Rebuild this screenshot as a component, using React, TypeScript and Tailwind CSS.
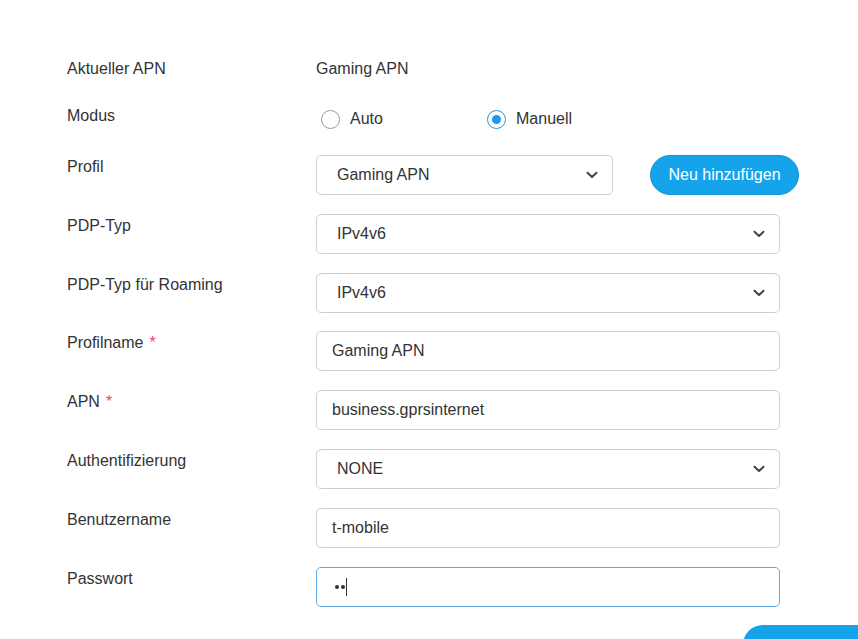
import React from 'react'

const Chevron = () => (
	<svg width="12" height="8" viewBox="0 0 12 8" className="shrink-0">
		<path d="M1.5 1.8 L6 6 L10.5 1.8" fill="none" stroke="#444" strokeWidth="2" strokeLinecap="round" strokeLinejoin="round" />
	</svg>
)

const Radio = ({ checked, label }: { checked?: boolean; label: string }) => (
	<label className="flex items-center gap-[10px] w-[166px]">
		{checked ? (
			<span className="w-[19px] h-[19px] rounded-full border-[1.5px] border-[#1a9be8] flex items-center justify-center">
				<span className="w-[9px] h-[9px] rounded-full bg-[#1a9be8]" />
			</span>
		) : (
			<span className="w-[19px] h-[19px] rounded-full border-[1.5px] border-[#9a9a9a]" />
		)}
		<span>{label}</span>
	</label>
)

const Select = ({ value, width = 'w-[464px]' }: { value: string; width?: string }) => (
	<div className={`${width} h-[40px] border border-[#cfcfcf] rounded-[5px] flex items-center justify-between pl-[20px] pr-[14px]`}>
		<span>{value}</span>
		<Chevron />
	</div>
)

const Input = ({ value }: { value: string }) => (
	<div className="w-[464px] h-[40px] border border-[#cfcfcf] rounded-[5px] flex items-center px-[15px]">
		<span>{value}</span>
	</div>
)

const Req = () => <span className="text-[#e8467c] ml-[6px]">*</span>

const Row = ({ label, children }: { label: React.ReactNode; children: React.ReactNode }) => (
	<div className="flex h-[40px]">
		<div className="w-[249px] leading-[22px] pt-[1px]">{label}</div>
		<div className="flex items-start gap-[37px]">{children}</div>
	</div>
)

const App = () => {
	return (
		<div className="w-[858px] h-[639px] overflow-hidden bg-white text-[16px] text-[#333] font-['Liberation_Sans',Arial,sans-serif]">
			<div className="pl-[67px] pt-[57px]">
				<div className="flex h-[24px] items-center">
					<div className="w-[249px]">Aktueller APN</div>
					<div>Gaming APN</div>
				</div>

				<div className="flex h-[26px] mt-[25px]">
					<div className="w-[249px] leading-[22px] -mt-[1px]">Modus</div>
					<div className="flex items-center h-[26px] pl-[5px]">
						<Radio label="Auto" />
						<Radio checked label="Manuell" />
					</div>
				</div>

				<div className="flex flex-col gap-[18.8px] mt-[23px]">
					<Row label="Profil">
						<Select value="Gaming APN" width="w-[297px]" />
						<button className="h-[40px] w-[149px] rounded-full bg-[#15a3eb] text-white border border-[#1592d4]">
							Neu hinzufügen
						</button>
					</Row>
					<Row label="PDP-Typ">
						<Select value="IPv4v6" />
					</Row>
					<Row label="PDP-Typ für Roaming">
						<Select value="IPv4v6" />
					</Row>
					<Row label={<>Profilname<Req /></>}>
						<Input value="Gaming APN" />
					</Row>
					<Row label={<>APN<Req /></>}>
						<Input value="business.gprsinternet" />
					</Row>
					<Row label="Authentifizierung">
						<Select value="NONE" />
					</Row>
					<Row label="Benutzername">
						<Input value="t-mobile" />
					</Row>
					<Row label="Passwort">
						<div className="w-[464px] h-[40px] border border-[#5eaae6] rounded-[5px] flex items-center pl-[18px]">
							<span className="w-[4px] h-[4px] rounded-full bg-[#333]" />
							<span className="w-[4px] h-[4px] rounded-full bg-[#333] ml-[2px]" />
							<span className="w-px h-[18px] bg-[#333] ml-[1px]" />
						</div>
					</Row>
				</div>

				<div className="flex pl-[676px] mt-[18px]">
					<div className="h-[40px] w-[149px] shrink-0 rounded-full bg-[#15a3eb]" />
				</div>
			</div>
		</div>
	)
}

export default App
